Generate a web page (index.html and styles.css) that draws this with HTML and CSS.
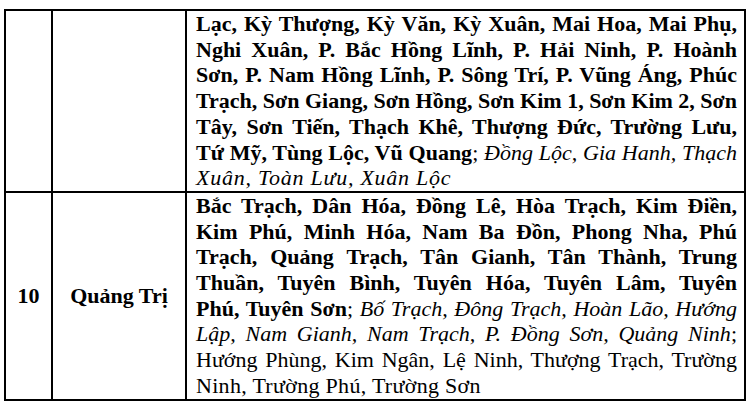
FILE: index.html
```html
<!DOCTYPE html>
<html lang="vi">
<head>
<meta charset="utf-8">
<link rel="stylesheet" href="styles.css">
</head>
<body>
<div class="grid">
  <div class="cell c-no"></div>
  <div class="cell c-prov"></div>
  <div class="cell c-list">
    <p class="lines"><b>Lạc, Kỳ Thượng, Kỳ Văn, Kỳ Xuân, Mai Hoa, Mai Phụ,<br>Nghi Xuân, P. Bắc Hồng Lĩnh, P. Hải Ninh, P. Hoành<br>Sơn, P. Nam Hồng Lĩnh, P. Sông Trí, P. Vũng Áng, Phúc<br>Trạch, Sơn Giang, Sơn Hồng, Sơn Kim 1, Sơn Kim 2, Sơn<br>Tây, Sơn Tiến, Thạch Khê, Thượng Đức, Trường Lưu,<br>Tứ Mỹ, Tùng Lộc, Vũ Quang</b>; <i>Đồng Lộc, Gia Hanh, Thạch</i></p>
    <p class="tail"><i>Xuân, Toàn Lưu, Xuân Lộc</i></p>
  </div>
  <div class="cell c-no last"><b>10</b></div>
  <div class="cell c-prov last"><b>Quảng Trị</b></div>
  <div class="cell c-list last">
    <p class="lines"><b>Bắc Trạch, Dân Hóa, Đồng Lê, Hòa Trạch, Kim Điền,<br>Kim Phú, Minh Hóa, Nam Ba Đồn, Phong Nha, Phú<br>Trạch, Quảng Trạch, Tân Gianh, Tân Thành, Trung<br>Thuần, Tuyên Bình, Tuyên Hóa, Tuyên Lâm, Tuyên<br>Phú, Tuyên Sơn</b>; <i>Bố Trạch, Đông Trạch, Hoàn Lão, Hướng<br>Lập, Nam Gianh, Nam Trạch, P. Đồng Sơn, Quảng Ninh</i>;<br>Hướng Phùng, Kim Ngân, Lệ Ninh, Thượng Trạch, Trường</p>
    <p class="tail">Ninh, Trường Phú, Trường Sơn</p>
  </div>
</div>
</body>
</html>
```
FILE: styles.css
```css
html, body {
  margin: 0;
  padding: 0;
  background: #fff;
}
body {
  font-family: "Liberation Serif", "Times New Roman", serif;
  font-size: 22px;
  line-height: 25.7px;
  color: #000;
}
.grid {
  display: grid;
  grid-template-columns: 47px 134px 1fr;
  width: 742px;
  box-sizing: border-box;
  border: 2px solid #000;
  margin: 9px 0 0 4px;
}
.cell {
  box-sizing: border-box;
  border-bottom: 2px solid #000;
}
.cell.last {
  border-bottom: none;
}
.c-no, .c-prov {
  border-right: 2px solid #000;
  display: flex;
  align-items: center;
  justify-content: center;
}
.c-list {
  padding: 0 7px 0 9px;
}
.lines {
  margin: 0;
  text-align: justify;
  text-align-last: justify;
}
.tail {
  margin: 0;
  text-align: left;
  letter-spacing: 0.3px;
}
.tail i {
  letter-spacing: 0.75px;
}
.c-list b { font-weight: bold; }
.c-list i { font-style: italic; }
```
